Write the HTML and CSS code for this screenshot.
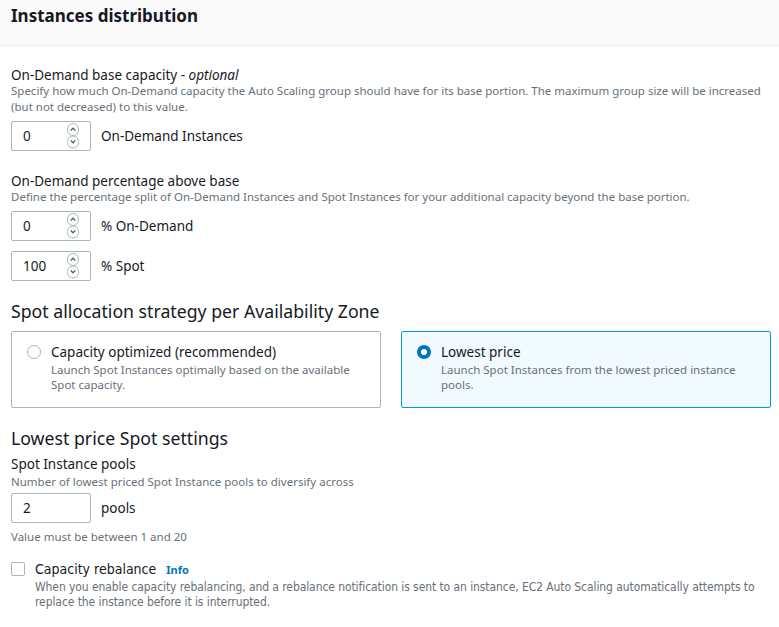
FILE: index.html
```html
<!DOCTYPE html>
<html>
<head>
<meta charset="utf-8">
<link rel="stylesheet" href="styles.css">
</head>
<body>
<div class="panel">
  <div class="header"><h2>Instances distribution</h2></div>
  <div class="content">
    <div class="field f1">
      <div class="label">On-Demand base capacity - <i>optional</i></div>
      <div class="desc">Specify how much On-Demand capacity the Auto Scaling group should have for its base portion. The maximum group size will be increased (but not decreased) to this value.</div>
      <div class="inrow">
        <div class="input"><span>0</span>
          <svg class="spin" width="14" height="28" viewBox="0 0 14 28"><rect x="1.5" y="1.5" width="11" height="12" rx="5.5" fill="none" stroke="#aab7b8"/><rect x="1.5" y="14" width="11" height="12" rx="5.5" fill="none" stroke="#aab7b8"/><path d="M4.6 8.6 L7 6.2 L9.4 8.6" fill="none" stroke="#545b64" stroke-width="1.3"/><path d="M4.6 18.4 L7 20.8 L9.4 18.4" fill="none" stroke="#545b64" stroke-width="1.3"/></svg>
        </div>
        <span class="unit">On-Demand Instances</span>
      </div>
    </div>

    <div class="field f2">
      <div class="label">On-Demand percentage above base</div>
      <div class="desc">Define the percentage split of On-Demand Instances and Spot Instances for your additional capacity beyond the base portion.</div>
      <div class="inrow">
        <div class="input"><span>0</span>
          <svg class="spin" width="14" height="28" viewBox="0 0 14 28"><rect x="1.5" y="1.5" width="11" height="12" rx="5.5" fill="none" stroke="#aab7b8"/><rect x="1.5" y="14" width="11" height="12" rx="5.5" fill="none" stroke="#aab7b8"/><path d="M4.6 8.6 L7 6.2 L9.4 8.6" fill="none" stroke="#545b64" stroke-width="1.3"/><path d="M4.6 18.4 L7 20.8 L9.4 18.4" fill="none" stroke="#545b64" stroke-width="1.3"/></svg>
        </div>
        <span class="unit">% On-Demand</span>
      </div>
      <div class="inrow r2">
        <div class="input"><span>100</span>
          <svg class="spin" width="14" height="28" viewBox="0 0 14 28"><rect x="1.5" y="1.5" width="11" height="12" rx="5.5" fill="none" stroke="#aab7b8"/><rect x="1.5" y="14" width="11" height="12" rx="5.5" fill="none" stroke="#aab7b8"/><path d="M4.6 8.6 L7 6.2 L9.4 8.6" fill="none" stroke="#545b64" stroke-width="1.3"/><path d="M4.6 18.4 L7 20.8 L9.4 18.4" fill="none" stroke="#545b64" stroke-width="1.3"/></svg>
        </div>
        <span class="unit">% Spot</span>
      </div>
    </div>

    <h3 class="sub h-spot">Spot allocation strategy per Availability Zone</h3>
    <div class="cards">
      <div class="card">
        <span class="radio"></span>
        <div class="ctext">
          <div class="ctitle">Capacity optimized (recommended)</div>
          <div class="cdesc">Launch Spot Instances optimally based on the available Spot capacity.</div>
        </div>
      </div>
      <div class="card sel">
        <span class="radio on"></span>
        <div class="ctext">
          <div class="ctitle">Lowest price</div>
          <div class="cdesc">Launch Spot Instances from the lowest priced instance pools.</div>
        </div>
      </div>
    </div>

    <h3 class="sub h-low">Lowest price Spot settings</h3>
    <div class="field f3">
      <div class="label">Spot Instance pools</div>
      <div class="desc">Number of lowest priced Spot Instance pools to diversify across</div>
      <div class="inrow">
        <div class="input"><span>2</span></div>
        <span class="unit">pools</span>
      </div>
      <div class="desc hint">Value must be between 1 and 20</div>
    </div>

    <div class="check">
      <span class="box"></span>
      <div class="chtext">
        <div class="chtitle">Capacity rebalance <span class="info">Info</span></div>
        <div class="chdesc">When you enable capacity rebalancing, and a rebalance notification is sent to an instance, EC2 Auto Scaling automatically attempts to replace the instance before it is interrupted.</div>
      </div>
    </div>
  </div>
</div>
</body>
</html>
```
FILE: styles.css
```css
* { box-sizing: border-box; }
body {
  margin: 0;
  background: #fff;
  font-family: "Noto Sans", "Open Sans", sans-serif;
  color: #16191f;
}
.panel { width: 779px; }
.header {
  height: 46px;
  background: #fafafa;
  border-bottom: 1px solid #eaeded;
  padding: 4px 11px 0;
}
.header h2 {
  margin: 0;
  font-size: 17px;
  font-weight: 700;
  line-height: 24px;
}
.content { padding: 22px 11px 0; }
.label { font-size: 13.5px; line-height: 16px; }
.f1 .label { line-height: 15px; }
.label i { font-style: italic; }
.desc {
  font-size: 11.5px;
  line-height: 16px;
  color: #687078;
}
.inrow {
  display: flex;
  align-items: center;
  gap: 10px;
  margin-top: 6px;
}
.input {
  width: 80px;
  height: 30px;
  border: 1px solid #aab7b8;
  border-radius: 2px;
  display: flex;
  align-items: center;
  padding-left: 11px;
  font-size: 13.5px;
  position: relative;
}
.spin { position: absolute; left: 54px; top: 0px; }
.unit { font-size: 13.5px; }
.r2 { margin-top: 10px; }
.f2 { margin-top: 22px; }
.f2 .inrow:first-of-type { margin-top: 7px; }
.sub {
  margin: 0;
  font-size: 17.7px;
  font-weight: 400;
  line-height: 24px;
}
.h-spot { margin-top: 18px; }
.cards {
  display: grid;
  grid-template-columns: 370px 370px;
  gap: 20px;
  margin-top: 8px;
}
.card {
  height: 77px;
  border: 1px solid #aab7b8;
  border-radius: 2px;
  display: flex;
  padding: 10px 20px 0 15px;
  gap: 10px;
}
.card.sel {
  background: #f1faff;
  border-color: #00a1c9;
}
.radio {
  width: 14px;
  height: 14px;
  border-radius: 50%;
  border: 1px solid #aab7b8;
  flex: none;
  margin-top: 3px;
  background: #fff;
}
.radio.on { border: 4px solid #0073bb; }
.ctitle { font-size: 13.5px; line-height: 20px; }
.cdesc { font-size: 11.5px; line-height: 15px; color: #687078; }
.h-low { margin-top: 18px; }
.f3 .label { margin-top: 4px; line-height: 20px; }
.f3 .inrow { margin-top: 3px; }
.hint { margin-top: 6px; }
.check {
  display: flex;
  gap: 10px;
  margin-top: 14px;
}
.box {
  width: 14px;
  height: 14px;
  border: 1px solid #aab7b8;
  border-radius: 2px;
  flex: none;
  margin-top: 3px;
}
.chtext { font-family: "Liberation Sans Narrow", "DejaVu Sans Condensed", sans-serif; }
.chtitle { font-size: 14px; line-height: 20px; }
.info {
  font-family: "Noto Sans", sans-serif;
  font-size: 11px;
  font-weight: 700;
  color: #0073bb;
  margin-left: 6px;
}
.chdesc { font-size: 12px; letter-spacing: -0.08px; line-height: 15px; color: #687078; }
```
